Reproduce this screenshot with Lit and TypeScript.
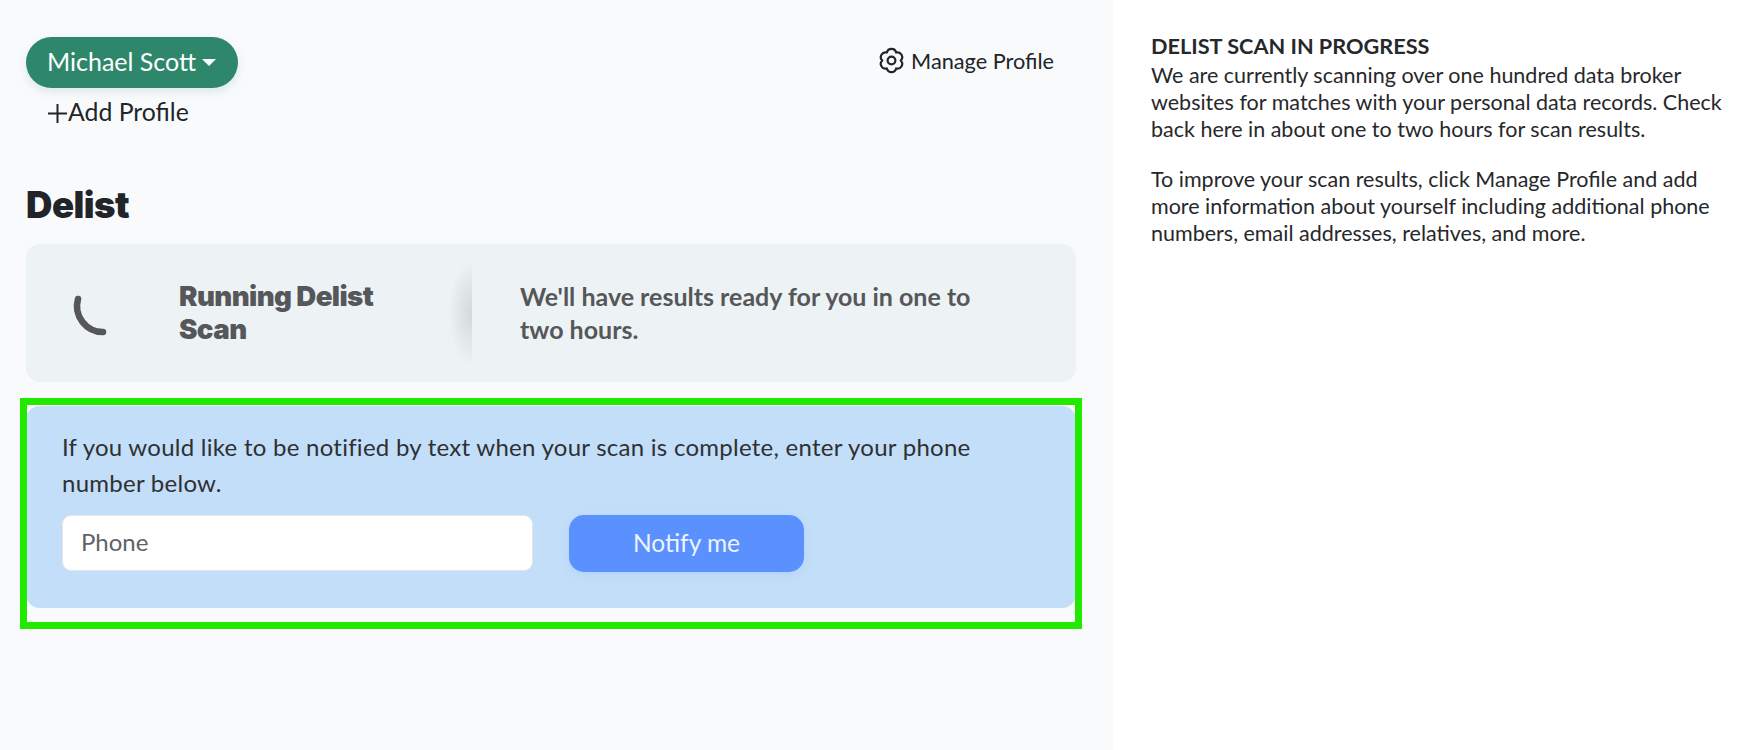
import { LitElement, html, css } from 'lit';
import { customElement } from 'lit/decorators.js';

@customElement('app-root')
export class AppRoot extends LitElement {
  static styles = css`
    :host {
      display: block;
      font-family: 'Lato', 'Noto Sans', sans-serif;
      color: #212529;
    }

    * {
      box-sizing: border-box;
    }

    .page {
      display: grid;
      grid-template-columns: 1113px 1fr;
      min-height: 750px;
      background: #fff;
    }

    .main {
      background: #f9fafc;
      padding: 37px 37px 0 26px;
    }

    .top {
      display: flex;
      justify-content: space-between;
      align-items: flex-start;
    }

    .pill {
      display: inline-flex;
      align-items: center;
      gap: 6px;
      height: 51px;
      width: 212px;
      padding: 0 21px 4px;
      border-radius: 26px;
      background: #2e876b;
      color: #fff;
      font-size: 25px;
      box-shadow: 0 4px 10px rgba(46, 135, 107, 0.15);
    }

    .caret {
      width: 0;
      height: 0;
      margin-top: 4px;
      border-left: 7px solid transparent;
      border-right: 7px solid transparent;
      border-top: 7px solid #fff;
    }

    .add {
      display: flex;
      align-items: center;
      margin: 10px 0 0 21px;
      font-size: 24.8px;
      line-height: 28px;
    }

    .add svg {
      width: 21px;
      height: 21px;
      margin-top: 2px;
    }

    .manage {
      display: flex;
      align-items: center;
      gap: 5px;
      height: 47px;
      margin-right: 22px;
      font-size: 21.7px;
    }

    .manage svg {
      width: 29px;
      height: 29px;
    }

    h1 {
      margin: 58px 0 0;
      font-family: 'Inter', sans-serif;
      font-size: 36.5px;
      line-height: 42px;
      font-weight: 900;
      letter-spacing: -0.5px;
    }

    .status {
      display: flex;
      align-items: center;
      height: 138px;
      margin-top: 18px;
      border-radius: 14px;
      background: #edf2f4;
      color: #55575a;
    }

    .spinner {
      width: 153px;
      padding-left: 44px;
      flex: none;
    }

    .spinner svg {
      display: block;
      width: 40px;
      height: 46px;
    }

    .status h2 {
      width: 293px;
      height: 100px;
      flex: none;
      display: flex;
      align-items: center;
      margin: 0;
      padding-right: 70px;
      font-family: 'Inter', sans-serif;
      font-size: 27.7px;
      line-height: 33px;
      font-weight: 900;
      letter-spacing: -0.6px;
      background: radial-gradient(ellipse 24px 52px at 100% 50%, rgba(0, 0, 0, 0.11), rgba(0, 0, 0, 0) 100%);
    }

    .status p {
      margin: 0;
      padding: 0 90px 0 48px;
      font-size: 25px;
      line-height: 33px;
      font-weight: 700;
    }

    .notify {
      position: relative;
      height: 202px;
      margin-top: 24px;
      padding: 23px 36px 0;
      border-radius: 14px;
      background: #c3def8;
      color: #2e3033;
    }

    .notify::after {
      content: '';
      position: absolute;
      inset: -8px -6px -21px -6px;
      border: 7px solid #22e900;
    }

    .notify p {
      margin: 0;
      padding-right: 60px;
      font-size: 24px;
      letter-spacing: 0.26px;
      line-height: 36px;
    }

    .form {
      display: flex;
      align-items: center;
      gap: 36px;
      margin-top: 13px;
    }

    input {
      width: 471px;
      height: 56px;
      padding: 0 18px 3px;
      border: 1px solid #e2e6ea;
      border-radius: 9px;
      background: #fff;
      font: inherit;
      font-size: 24px;
    }

    input::placeholder {
      color: #5f6368;
      opacity: 1;
    }

    button {
      width: 235px;
      height: 57px;
      margin-top: 1px;
      padding: 0 0 3px;
      border: none;
      border-radius: 15px;
      background: #5a91ff;
      color: #eef4ff;
      font: inherit;
      font-size: 24.5px;
      box-shadow: 0 3px 8px rgba(90, 145, 255, 0.15);
    }

    .side {
      padding: 33px 30px 0 38px;
      font-size: 21.5px;
      line-height: 27px;
      color: #26282b;
    }

    .side h3 {
      margin: 0 0 2px;
      font-size: 21.7px;
      line-height: 27px;
      font-weight: 700;
    }

    .side p {
      margin: 0 0 23px;
    }
  `;

  render() {
    return html`
      <div class="page">
        <div class="main">
          <div class="top">
            <div>
              <div class="pill">Michael Scott <span class="caret"></span></div>
              <div class="add">
                <svg viewBox="0 0 21 21" fill="none" stroke="#212529" stroke-width="2">
                  <path d="M10.5 1v19M1 10.5h19" />
                </svg>
                Add Profile
              </div>
            </div>
            <div class="manage">
              <svg viewBox="0 0 24 24" fill="none" stroke="#212529" stroke-width="1.8" stroke-linejoin="round">
                <path d="M19.6 12A3.9 3.9 0 0 1 15.8 18.58A3.9 3.9 0 0 1 8.2 18.58A3.9 3.9 0 0 1 4.4 12A3.9 3.9 0 0 1 8.2 5.42A3.9 3.9 0 0 1 15.8 5.42A3.9 3.9 0 0 1 19.6 12Z" />
                <circle cx="12" cy="12" r="3.2" />
              </svg>
              Manage Profile
            </div>
          </div>
          <h1>Delist</h1>
          <div class="status">
            <div class="spinner">
              <svg viewBox="0 0 40 46" fill="none" stroke="#55575a" stroke-width="6.5" stroke-linecap="round">
                <path d="M8 9A26 26 0 0 0 33 42" />
              </svg>
            </div>
            <h2>Running Delist Scan</h2>
            <p>We'll have results ready for you in one to two hours.</p>
          </div>
          <div class="notify">
            <p>If you would like to be notified by text when your scan is complete, enter your phone number below.</p>
            <div class="form">
              <input placeholder="Phone" />
              <button>Notify me</button>
            </div>
          </div>
        </div>
        <div class="side">
          <h3>DELIST SCAN IN PROGRESS</h3>
          <p>We are currently scanning over one hundred data broker websites for matches with your personal data records. Check back here in about one to two hours for scan results.</p>
          <p>To improve your scan results, click Manage Profile and add more information about yourself including additional phone numbers, email addresses, relatives, and more.</p>
        </div>
      </div>
    `;
  }
}
